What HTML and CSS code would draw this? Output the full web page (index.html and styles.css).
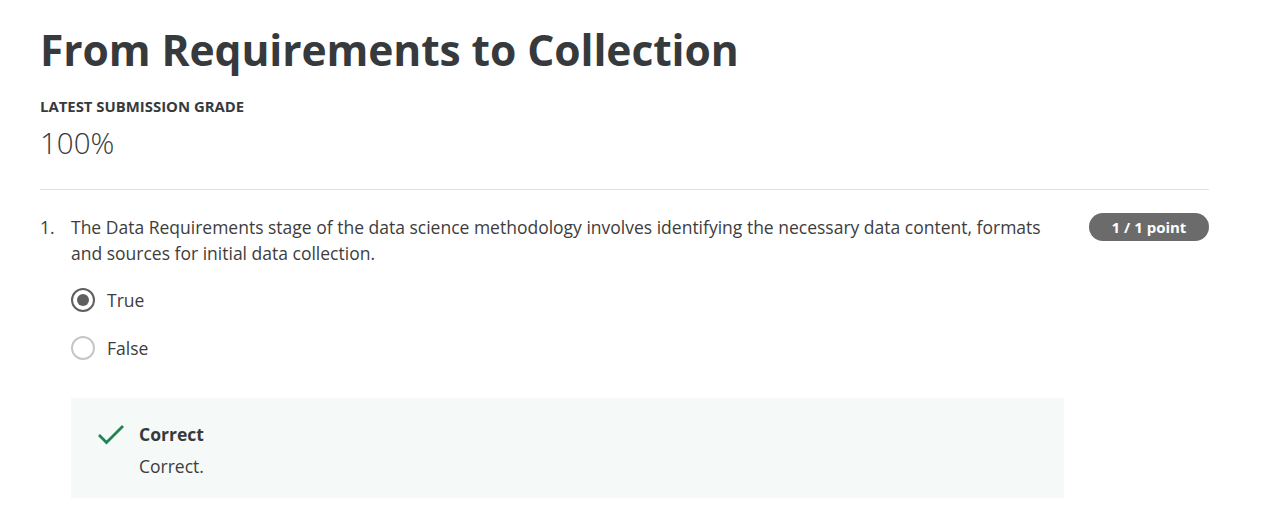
FILE: index.html
```html
<!DOCTYPE html>
<html>
<head>
<meta charset="utf-8">
<link rel="stylesheet" href="styles.css">
</head>
<body>
<main class="page">
  <h1 class="title">From Requirements to Collection</h1>
  <div class="grade-label">LATEST SUBMISSION GRADE</div>
  <div class="grade">100%</div>
  <hr class="divider">
  <section class="question">
    <div class="q-head">
      <div class="q-num">1.</div>
      <div class="q-text">The Data Requirements stage of the data science methodology involves identifying the necessary data content, formats and sources for initial data collection.</div>
      <div class="badge">1 / 1 point</div>
    </div>
    <div class="options">
      <div class="option">
        <span class="radio checked"></span>
        <span class="opt-label">True</span>
      </div>
      <div class="option">
        <span class="radio"></span>
        <span class="opt-label">False</span>
      </div>
    </div>
    <div class="feedback">
      <svg class="check" width="28" height="22" viewBox="0 0 28 22"><path d="M2 10 L9.5 17.5 L26 1" fill="none" stroke="#1f8354" stroke-width="2.8"/></svg>
      <div class="fb-body">
        <div class="fb-title">Correct</div>
        <div class="fb-text">Correct.</div>
      </div>
    </div>
  </section>
</main>
</body>
</html>
```
FILE: styles.css
```css
* { box-sizing: border-box; }
body {
  margin: 0;
  background: #fff;
  font-family: "Open Sans", "Noto Sans", sans-serif;
  color: #3d3d3d;
}
.page {
  padding: 20px 55px 0 40px;
}
.title {
  margin: 0;
  font-size: 42.6px;
  font-weight: 700;
  line-height: 58px;
  color: #373a3c;
  letter-spacing: -0.1px;
}
.grade-label {
  margin-top: 18px;
  font-size: 14.9px;
  font-weight: 700;
  line-height: 20px;
  color: #373a3c;
}
.grade {
  margin-top: 9px;
  font-size: 29.5px;
  font-weight: 300;
  line-height: 36px;
  color: #373a3c;
}
.divider {
  margin: 28px 0 0;
  border: 0;
  border-top: 1px solid #e1e1e1;
}
.question {
  padding-top: 24px;
}
.q-head {
  display: flex;
  align-items: flex-start;
}
.q-num {
  width: 31px;
  font-size: 17.5px;
  line-height: 26px;
}
.q-text {
  flex: 1;
  font-size: 17.5px;
  line-height: 26px;
  padding-right: 44px;
}
.badge {
  margin-top: -1px;
  width: 120px;
  height: 28px;
  border-radius: 14px;
  background: #6b6b6b;
  color: #fff;
  font-size: 15px;
  font-weight: 700;
  line-height: 28px;
  text-align: center;
}
.options {
  margin-left: 31px;
  padding-top: 22px;
  display: flex;
  flex-direction: column;
  gap: 24px;
}
.option {
  display: flex;
  align-items: center;
  gap: 12px;
  height: 24px;
}
.radio {
  width: 24px;
  height: 24px;
  border-radius: 50%;
  border: 2px solid #c6c6c6;
  display: flex;
  align-items: center;
  justify-content: center;
}
.radio.checked {
  border: 2px solid #5f5f5f;
}
.radio.checked::after {
  content: "";
  width: 12px;
  height: 12px;
  border-radius: 50%;
  background: #5f5f5f;
}
.opt-label {
  font-size: 17.5px;
  line-height: 24px;
}
.feedback {
  margin: 38px 145px 0 31px;
  background: #f5f9f8;
  padding: 23px 26px 19px;
  display: flex;
  gap: 14px;
}
.check {
  margin-top: 4px;
}
.fb-title {
  font-size: 17.5px;
  font-weight: 700;
  line-height: 26px;
  color: #373a3c;
}
.fb-text {
  margin-top: 6px;
  font-size: 17.5px;
  line-height: 26px;
}
```
